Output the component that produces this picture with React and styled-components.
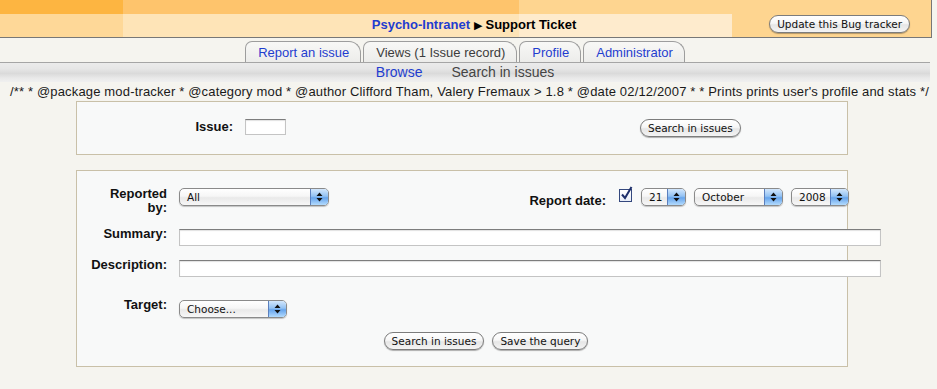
import React from "react";
import styled, { createGlobalStyle } from "styled-components";

const GlobalStyle = createGlobalStyle`
  body {
    margin: 0;
    background: #f5f4ef;
    font-family: "Liberation Sans", Arial, sans-serif;
    font-size: 13px;
    color: #222;
  }
`;

const blue = "#1f3dcf";

// Header
const Header = styled.div`
  width: 932px;
  height: 38px;
  box-sizing: border-box;
  padding-top: 14px;
  border-right: 1px solid #777;
  border-bottom: 1px solid #777;
  display: grid;
  grid-template-columns: 1fr auto 1fr;
  align-items: center;
  background:
    linear-gradient(#fdb541, #fdb541) 0 0 / 123px 14px no-repeat,
    linear-gradient(#fec46c, #fec46c) 123px 0 / 396px 14px no-repeat,
    linear-gradient(#fed898, #fed898) 0 14px / 123px 100% no-repeat,
    linear-gradient(#fee4b7, #fee4b7) 123px 14px / 396px 100% no-repeat,
    linear-gradient(#feebcd, #feebcd) 519px 14px / 213px 100% no-repeat,
    #fed590;
`;

const Title = styled.div`
  grid-column: 2;
  padding-left: 17px;
  font-weight: bold;
  line-height: 14px;
  color: #000;
  a {
    color: ${blue};
    text-decoration: none;
  }
  span {
    font-family: "DejaVu Sans", sans-serif;
    font-size: 11px;
    margin: 0 3px 0 4px;
  }
`;

const AquaButton = styled.button`
  height: 18px;
  padding: 0 7px;
  border: 1px solid #7c7c7c;
  border-radius: 9px;
  background: linear-gradient(#ffffff, #f7f7f7 45%, #e6e6e6 55%, #f4f4f4);
  box-shadow: 0 1px 1px rgba(0, 0, 0, 0.3);
  font-family: "DejaVu Sans", sans-serif;
  font-size: 10.5px;
  line-height: 16px;
  color: #111;
  white-space: nowrap;
  justify-self: start;
`;

const UpdateButton = styled(AquaButton)`
  grid-column: 3;
  justify-self: end;
  align-self: start;
  margin: 1px 21px 0 0;
`;

// Tabs
const TabRow = styled.div`
  width: 930px;
  padding-top: 3px;
  border-bottom: 1px solid #a5a5a5;
  display: flex;
  justify-content: center;
  gap: 2px;
`;

const Tab = styled.a`
  height: 21px;
  box-sizing: border-box;
  padding: 3px 11px 0 12px;
  border: 1px solid #9d9d9d;
  border-bottom: none;
  border-radius: 7px 12px 0 0;
  background: linear-gradient(#f8f8f6, #ececea);
  line-height: 16px;
  color: ${(p) => (p.$active ? "#3c3c3c" : blue)};
  text-decoration: none;
  white-space: nowrap;
`;

const SubRow = styled.div`
  width: 930px;
  height: 19px;
  padding-top: 1px;
  box-sizing: border-box;
  background: linear-gradient(#ebebeb, #e6e6e6 30%, #dadada 55%, #e9e9e9 80%, #f0f0f0);
  display: flex;
  justify-content: center;
  gap: 29px;
  font-size: 14px;
  line-height: 16px;
`;

const SubLink = styled.a`
  color: ${(p) => (p.$active ? "#444" : blue)};
  text-decoration: none;
`;

const Comment = styled.div`
  margin: 3px 0 0 10px;
  line-height: 14px;
  letter-spacing: 0.16px;
  color: #1a1a1a;
  white-space: nowrap;
`;

// Boxes
const Box = styled.div`
  width: 772px;
  box-sizing: border-box;
  margin: ${(p) => p.$top}px 0 0 76px;
  border: 1px solid #c9c0a8;
  background: #f8f9f9;
`;

const IssueBox = styled(Box)`
  height: 54px;
  padding-top: 17px;
  display: grid;
  grid-template-columns: 156px 41px 330px auto;
  column-gap: 12px;
  align-items: start;
`;

const SearchBox = styled(Box)`
  padding: 16px 0 16px 14px;
  display: grid;
  grid-template-columns: 76px 702px;
  column-gap: 12px;
  row-gap: 12px;
  align-items: start;
`;

const Label = styled.label`
  font-weight: bold;
  line-height: 14px;
  text-align: right;
  color: #111;
  white-space: nowrap;
  margin-top: ${(p) => p.$top || 0}px;
`;

const TextInput = styled.input`
  box-sizing: border-box;
  width: ${(p) => p.$w}px;
  height: ${(p) => p.$h || 17}px;
  margin: ${(p) => p.$top || 0}px 0 0;
  padding: 0 3px;
  border: 1px solid #c4c4c4;
  border-top-color: #7d7d7d;
  background: #fff;
  box-shadow: inset 0 1px 1px rgba(0, 0, 0, 0.12);
  font: 11px "DejaVu Sans", sans-serif;
`;

const ReportRow = styled.div`
  display: flex;
  align-items: flex-start;
  justify-content: space-between;
  padding-right: 32px;
  min-height: 28px;
`;

const DateGroup = styled.div`
  display: flex;
  align-self: stretch;
  align-items: flex-start;
  label {
    align-self: center;
    margin-right: 13px;
  }
`;

const Selects = styled.div`
  display: flex;
  gap: 8px;
  margin-left: 9px;
  padding-top: 1px;
`;

const Popup = styled.div`
  display: inline-flex;
  box-sizing: border-box;
  width: ${(p) => p.$w}px;
  height: 18px;
  margin-top: ${(p) => p.$top || 0}px;
  border: 1px solid #8a8a8a;
  border-radius: 5px;
  overflow: hidden;
  background: linear-gradient(#ffffff, #f6f6f6 45%, #e9e9e9 55%, #f7f7f7);
  box-shadow: 0 1px 1px rgba(0, 0, 0, 0.22);
  font-family: "DejaVu Sans", sans-serif;
  font-size: 10.5px;
  line-height: 16px;
  color: #111;
`;

const PopupValue = styled.span`
  flex: 1;
  padding-left: 7px;
  white-space: nowrap;
`;

const Stepper = styled.span`
  width: 17px;
  border-left: 1px solid #5b7fbd;
  background: linear-gradient(#d3e7fc, #93c2f3 45%, #66a4ec 55%, #b3dbfd);
  display: flex;
  align-items: center;
  justify-content: center;
`;

const Check = styled.span`
  position: relative;
  width: 11px;
  height: 11px;
  margin-top: 2px;
  border: 1px solid #34487e;
  background: linear-gradient(#ffffff, #e8eef8);
  svg {
    position: absolute;
    left: 0;
    top: -4px;
  }
`;

const ButtonRow = styled.div`
  grid-column: 1 / -1;
  margin-top: 2px;
  display: flex;
  justify-content: center;
  gap: 8px;
`;

const Arrows = () => (
  <svg width="7" height="10" viewBox="0 0 7 10">
    <path d="M3.5 0.5 L6.5 4 L0.5 4 Z M0.5 6 L6.5 6 L3.5 9.5 Z" fill="#111" />
  </svg>
);

const Select = ({ value, w, top }) => (
  <Popup $w={w} $top={top}>
    <PopupValue>{value}</PopupValue>
    <Stepper>
      <Arrows />
    </Stepper>
  </Popup>
);

const App = () => {
  return (
    <>
      <GlobalStyle />
      <Header>
        <Title>
          <a href="#">Psycho-Intranet</a>
          <span>▶</span>Support Ticket
        </Title>
        <UpdateButton>Update this Bug tracker</UpdateButton>
      </Header>

      <TabRow>
        <Tab href="#">Report an issue</Tab>
        <Tab $active>Views (1 Issue record)</Tab>
        <Tab href="#">Profile</Tab>
        <Tab href="#">Administrator</Tab>
      </TabRow>
      <SubRow>
        <SubLink href="#">Browse</SubLink>
        <SubLink $active>Search in issues</SubLink>
      </SubRow>

      <Comment>
        {"/** * @package mod-tracker * @category mod * @author Clifford Tham, Valery Fremaux > 1.8 * @date 02/12/2007 * * Prints prints user's profile and stats */"}
      </Comment>

      <IssueBox $top={2}>
        <Label $top={1}>Issue:</Label>
        <TextInput $w={41} $h={16} />
        <span />
        <AquaButton>Search in issues</AquaButton>
      </IssueBox>

      <SearchBox $top={15}>
        <Label>
          Reported
          <br />
          by:
        </Label>
        <ReportRow>
          <Select value="All" w={150} top={1} />
          <DateGroup>
            <Label>Report date:</Label>
            <Check>
              <svg width="13" height="15" viewBox="0 0 13 15">
                <path d="M2 8.5 L5 12 L11.5 1" stroke="#1d2f6b" strokeWidth="2" fill="none" />
              </svg>
            </Check>
            <Selects>
              <Select value="21" w={45} />
              <Select value="October" w={89} />
              <Select value="2008" w={58} />
            </Selects>
          </DateGroup>
        </ReportRow>

        <Label>Summary:</Label>
        <TextInput $w={702} $top={2} />

        <Label>Description:</Label>
        <TextInput $w={702} $top={2} />

        <Label $top={9}>Target:</Label>
        <Select value="Choose..." w={108} top={11} />

        <ButtonRow>
          <AquaButton>Search in issues</AquaButton>
          <AquaButton>Save the query</AquaButton>
        </ButtonRow>
      </SearchBox>
    </>
  );
};

export default App;
